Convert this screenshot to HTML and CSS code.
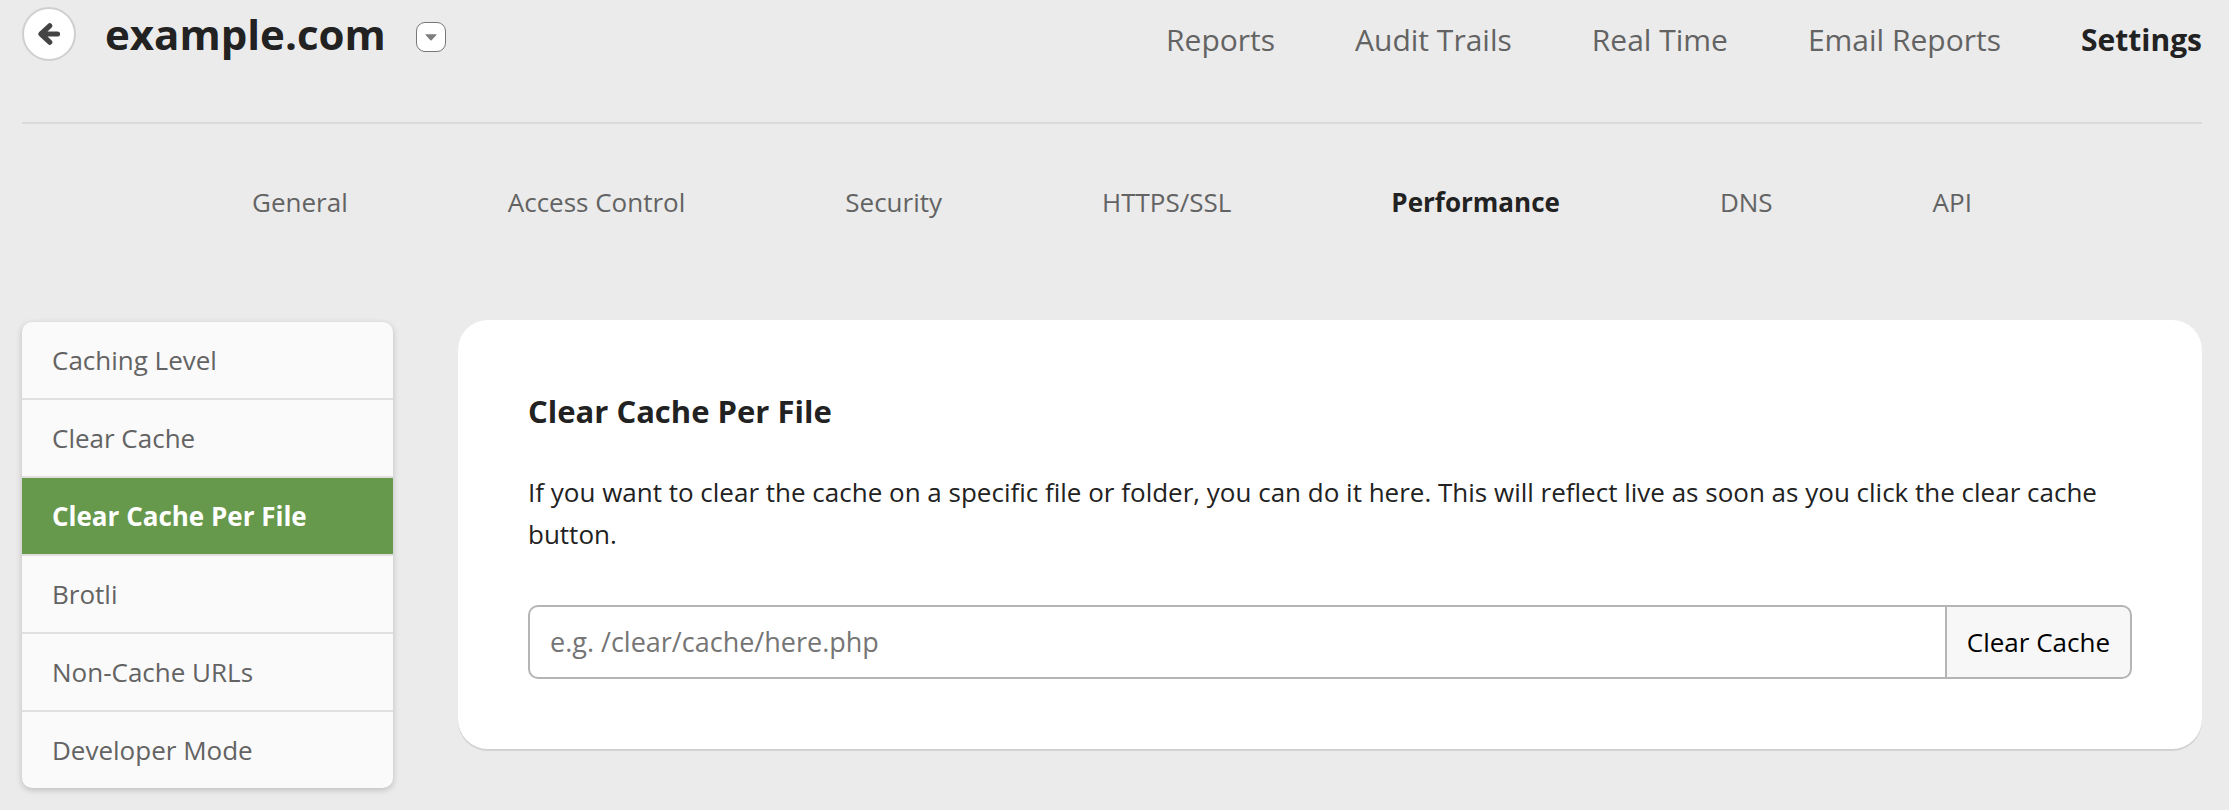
FILE: index.html
```html
<!DOCTYPE html>
<html lang="en">
<head>
<meta charset="utf-8">
<meta name="viewport" content="width=device-width, initial-scale=1">
<title>example.com – Settings</title>
<link rel="stylesheet" href="styles.css">
</head>
<body>
<header class="header">
  <div class="site">
    <a class="back" href="#" aria-label="Back">
      <svg class="back-icon" viewBox="0 0 22 22" aria-hidden="true"><path d="M11.7 2.8L3 11l8.7 8.2M4 11h15.5" fill="none" stroke="#444" stroke-width="5.2" stroke-linecap="round" stroke-linejoin="round"/></svg>
    </a>
    <h1 class="site-name">example.com</h1>
    <button class="site-switch" type="button" aria-label="Switch site">
      <svg class="switch-icon" viewBox="0 0 12 7" aria-hidden="true"><path d="M0.8 0.3h10.4q.8 0 .2.7L6.6 6.2q-.6.5-1.2 0L.6 1q-.6-.7.2-.7z" fill="#7d7d7d"/></svg>
    </button>
  </div>
  <nav class="main-nav" aria-label="Main">
    <a href="#">Reports</a>
    <a href="#">Audit Trails</a>
    <a href="#">Real Time</a>
    <a href="#">Email Reports</a>
    <a class="active" href="#" aria-current="page">Settings</a>
  </nav>
</header>
<nav class="sub-nav" aria-label="Settings">
  <a href="#">General</a>
  <a href="#">Access Control</a>
  <a href="#">Security</a>
  <a href="#">HTTPS/SSL</a>
  <a class="active" href="#" aria-current="page">Performance</a>
  <a href="#">DNS</a>
  <a href="#">API</a>
</nav>
<div class="content">
  <nav class="side-nav" aria-label="Performance">
    <a href="#">Caching Level</a>
    <a href="#">Clear Cache</a>
    <a class="active" href="#" aria-current="page">Clear Cache Per File</a>
    <a href="#">Brotli</a>
    <a href="#">Non-Cache URLs</a>
    <a href="#">Developer Mode</a>
  </nav>
  <main class="card">
    <h2 class="card-title">Clear Cache Per File</h2>
    <p class="card-text">If you want to clear the cache on a specific file or folder, you can do it here. This will reflect live as soon as you click the clear cache button.</p>
    <form class="clear-form">
      <input class="path" type="text" placeholder="e.g. /clear/cache/here.php" aria-label="File or folder path">
      <button class="submit" type="button">Clear Cache</button>
    </form>
  </main>
</div>
</body>
</html>
```
FILE: styles.css
```css
* {
  box-sizing: border-box;
}

body {
  margin: 0;
  padding: 0 27px 20px 22px;
  background: #ebebeb;
  color: #222;
  font-family: "Open Sans", "Noto Sans", sans-serif;
  font-size: 26px;
  line-height: 42px;
}

a {
  color: #636363;
  text-decoration: none;
}

.header {
  display: flex;
  justify-content: space-between;
  align-items: flex-start;
  padding-bottom: 54px;
  border-bottom: 2px solid #dadada;
}

.site {
  display: flex;
  align-items: center;
  height: 68px;
}

.back {
  display: flex;
  align-items: center;
  justify-content: center;
  width: 54px;
  height: 54px;
  border: 2px solid #cfcfcf;
  border-radius: 50%;
  background: #fff;
}

.back-icon {
  width: 22px;
  height: 22px;
}

.site-name {
  margin: 0 30px 0 29px;
  font-size: 42px;
  line-height: 68px;
  font-weight: 700;
}

.site-switch {
  display: flex;
  align-items: center;
  justify-content: center;
  width: 30px;
  height: 30px;
  margin-top: 6px;
  padding: 0;
  border: 1px solid #777;
  border-radius: 9px;
  background: #fff;
}

.switch-icon {
  width: 12px;
  height: 7px;
}

.main-nav {
  display: flex;
  gap: 80px;
  padding-top: 19px;
  font-size: 30px;
}

.main-nav .active,
.sub-nav .active {
  color: #222;
  font-weight: 700;
}

.sub-nav {
  display: flex;
  justify-content: center;
  gap: 160px;
  padding: 57px 0 97px;
}

.content {
  display: flex;
  align-items: flex-start;
  gap: 65px;
}

.side-nav {
  flex: 0 0 371px;
  margin-top: 2px;
  overflow: hidden;
  border-radius: 10px;
  background: #fafafa;
  box-shadow: 0 2px 6px rgba(0, 0, 0, 0.2);
}

.side-nav a {
  display: block;
  padding: 17px 30px;
}

.side-nav a + a {
  border-top: 2px solid #e0e0e0;
}

.side-nav .active {
  background: #67994d;
  color: #fff;
  font-weight: 700;
}

.card {
  flex: 1;
  padding: 70px;
  border-radius: 30px;
  background: #fff;
  box-shadow: 0 2px 0 #d2d2d2;
}

.card-title {
  margin: 0 0 39px;
  font-size: 31px;
  font-weight: 700;
}

.card-text {
  margin: 0 0 50px;
}

.clear-form {
  display: flex;
  height: 74px;
}

.path,
.submit {
  border: 2px solid #b5b5b5;
  padding: 0 20px;
  font: inherit;
}

.path {
  flex: 1;
  min-width: 0;
  border-right: 0;
  border-radius: 10px 0 0 10px;
  background: #fff;
  color: #222;
  font-size: 27px;
}

.path::placeholder {
  color: #757575;
  opacity: 1;
}

.submit {
  border-radius: 0 10px 10px 0;
  background: #f7f7f7;
  color: #000;
}
```
